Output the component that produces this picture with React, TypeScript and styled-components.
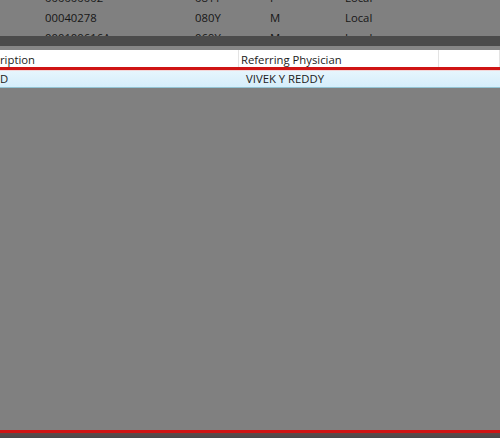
import React from "react";
import styled, { createGlobalStyle } from "styled-components";

const Global = createGlobalStyle`
  html, body {
    margin: 0;
    padding: 0;
    background: #808080;
    overflow: hidden;
  }
  body {
    font-family: "Open Sans", "Noto Sans", sans-serif;
    font-size: 11.3px;
  }
`;

const Page = styled.div`
  width: 500px;
  height: 438px;
  display: flex;
  flex-direction: column;
  background: #808080;
`;

const StudyList = styled.div`
  height: 36px;
  overflow: hidden;
  flex: none;
`;

const StudyRows = styled.div`
  margin-top: -12px;
  display: flex;
  flex-direction: column;
`;

const StudyRow = styled.div`
  height: 20px;
  display: grid;
  grid-template-columns: 45px 150px 75px 75px 1fr;
  align-items: center;
  color: #161616;
  font-size: 11.3px;
  line-height: 20px;
  white-space: nowrap;
`;

const Splitter = styled.div`
  height: 10px;
  flex: none;
  background: #4b4b4b;
`;

const Gap = styled.div`
  height: 4px;
  flex: none;
  background: #868686;
`;

const Panel = styled.div`
  flex: 1;
  display: flex;
  flex-direction: column;
`;

const HeaderRow = styled.div`
  height: 17px;
  flex: none;
  display: grid;
  grid-template-columns: 239px 200px 1fr;
  background: #ffffff;
  color: #1b1b1b;
  font-size: 11.3px;
  line-height: 19px;
`;

const HeaderCell = styled.div<{ $pad: number }>`
  padding-left: ${(p) => p.$pad}px;
  border-right: 1px solid #e3e3e3;
  white-space: nowrap;
  overflow: hidden;
`;

const RedRule = styled.div`
  height: 3px;
  flex: none;
  background: #cf1414;
  border-bottom: 1px solid #f3d6d8;
`;

const DataRow = styled.div`
  height: 16px;
  flex: none;
  display: grid;
  grid-template-columns: 240px 200px 1fr;
  background: linear-gradient(#e6f5fd, #d5eefb);
  border-bottom: 1px solid #93c4d4;
  color: #1b1b1b;
  font-size: 11.3px;
  line-height: 16px;
`;

const DataCell = styled.div<{ $pad: number }>`
  padding-left: ${(p) => p.$pad}px;
  white-space: nowrap;
  overflow: hidden;
`;

const Empty = styled.div`
  flex: 1;
  background: #808080;
`;

const BottomRule = styled.div`
  height: 3px;
  flex: none;
  background: #cf1414;
`;

const BottomEdge = styled.div`
  height: 5px;
  flex: none;
  background: linear-gradient(#5e4a4a, #4a4a4a);
`;

const rows = [
  ["000000002", "081Y", "F", "Local"],
  ["00040278", "080Y", "M", "Local"],
  ["000100616A", "069Y", "M", "Local"],
];

export default function App() {
  return (
    <Page>
      <Global />
      <StudyList>
        <StudyRows>
          {rows.map((r, i) => (
            <StudyRow key={i}>
              <span />
              <span>{r[0]}</span>
              <span>{r[1]}</span>
              <span>{r[2]}</span>
              <span>{r[3]}</span>
            </StudyRow>
          ))}
        </StudyRows>
      </StudyList>
      <Splitter />
      <Gap />
      <Panel>
        <HeaderRow>
          <HeaderCell $pad={0}>ription</HeaderCell>
          <HeaderCell $pad={2}>Referring Physician</HeaderCell>
          <HeaderCell $pad={2} />
        </HeaderRow>
        <RedRule />
        <DataRow>
          <DataCell $pad={0}>D</DataCell>
          <DataCell $pad={6}>VIVEK Y REDDY</DataCell>
          <DataCell $pad={0} />
        </DataRow>
        <Empty />
        <BottomRule />
        <BottomEdge />
      </Panel>
    </Page>
  );
}
